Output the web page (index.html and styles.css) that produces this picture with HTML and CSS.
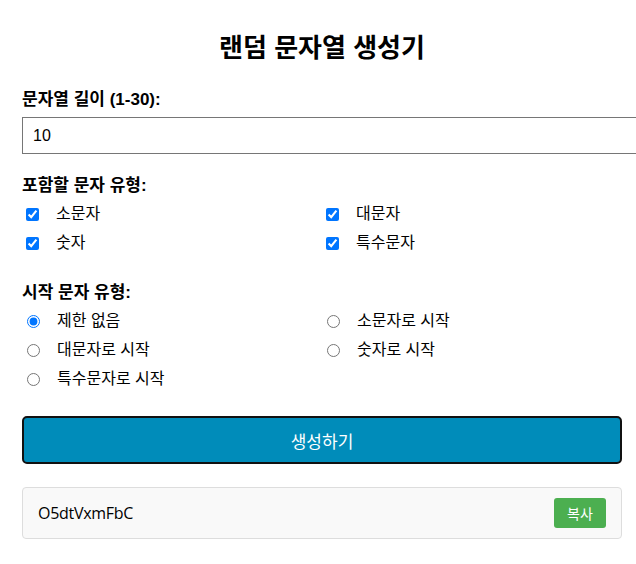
FILE: index.html
```html
<!DOCTYPE html>
<html lang="ko">
<head>
<meta charset="utf-8">
<title>랜덤 문자열 생성기</title>
<link rel="stylesheet" href="styles.css">
</head>
<body>
<div class="page">
  <h1 class="title">랜덤 문자열 생성기</h1>

  <label class="field-label" for="len">문자열 길이 (1-30):</label>
  <input class="len-input" id="len" type="number" value="10" min="1" max="30">

  <div class="field-label section">포함할 문자 유형:</div>
  <div class="opt-grid">
    <label class="opt"><input class="chk" type="checkbox" checked><span>소문자</span></label>
    <label class="opt"><input class="chk" type="checkbox" checked><span>대문자</span></label>
    <label class="opt"><input class="chk" type="checkbox" checked><span>숫자</span></label>
    <label class="opt"><input class="chk" type="checkbox" checked><span>특수문자</span></label>
  </div>

  <div class="field-label section2">시작 문자 유형:</div>
  <div class="opt-grid">
    <label class="opt"><input class="rad" type="radio" name="start" checked><span>제한 없음</span></label>
    <label class="opt"><input class="rad" type="radio" name="start"><span>소문자로 시작</span></label>
    <label class="opt"><input class="rad" type="radio" name="start"><span>대문자로 시작</span></label>
    <label class="opt"><input class="rad" type="radio" name="start"><span>숫자로 시작</span></label>
    <label class="opt"><input class="rad" type="radio" name="start"><span>특수문자로 시작</span></label>
  </div>

  <button class="gen-btn" type="button">생성하기</button>

  <div class="result">
    <span class="result-text">O5dtVxmFbC</span>
    <button class="copy-btn" type="button">복사</button>
  </div>
</div>
</body>
</html>
```

FILE: styles.css
```css
html, body {
  margin: 0;
  padding: 0;
  background: #ffffff;
}

body {
  font-family: "Liberation Sans", Arial, "Noto Sans CJK KR", sans-serif;
  color: #000;
}

.page {
  width: 600px;
  margin: 0 0 0 22px;
  padding-top: 34px;
  display: flex;
  flex-direction: column;
}

.title {
  margin: 0;
  font-size: 26px;
  line-height: 28px;
  font-weight: bold;
  text-align: center;
}

.field-label {
  display: block;
  margin-top: 28px;
  font-size: 17px;
  line-height: 20px;
  font-weight: bold;
}

.len-input {
  box-sizing: content-box;
  width: 100%;
  margin-top: 7px;
  padding: 8px 10px;
  height: 19px;
  font-family: "Liberation Sans", Arial, sans-serif;
  font-size: 16px;
  line-height: 19px;
  border: 1px solid #767676;
  border-radius: 0;
  color: #000;
  outline: none;
}

.section {
  margin-top: 22px;
}

.section2 {
  margin-top: 30px;
}

.opt-grid {
  display: grid;
  grid-template-columns: 300px 300px;
  row-gap: 9px;
  margin-top: 8px;
}

.opt {
  display: flex;
  align-items: center;
  height: 20px;
  font-size: 16px;
  line-height: 20px;
}

.chk {
  width: 13px;
  height: 13px;
  margin: 0 17px 0 4px;
}

.rad {
  width: 13px;
  height: 13px;
  margin: 0 17px 0 5px;
}

.gen-btn {
  margin-top: 27px;
  height: 48px;
  width: 100%;
  background: #008cba;
  color: #ffffff;
  border: 2px solid #111111;
  border-radius: 5px;
  font-family: "Noto Sans CJK KR", "Noto Sans", sans-serif;
  font-size: 17px;
  cursor: pointer;
}

.result {
  margin-top: 23px;
  box-sizing: border-box;
  height: 52px;
  border: 1px solid #dddddd;
  border-radius: 4px;
  background: #f9f9f9;
  display: flex;
  align-items: center;
  justify-content: space-between;
  padding: 0 15px 0 15px;
}

.result-text {
  font-family: "Open Sans", "Noto Sans", sans-serif;
  font-size: 16px;
  letter-spacing: -0.3px;
}

.copy-btn {
  width: 52px;
  height: 30px;
  background: #4caf50;
  color: #ffffff;
  border: none;
  border-radius: 3px;
  font-family: "Noto Sans CJK KR", sans-serif;
  font-size: 14px;
  padding: 0;
}
```
